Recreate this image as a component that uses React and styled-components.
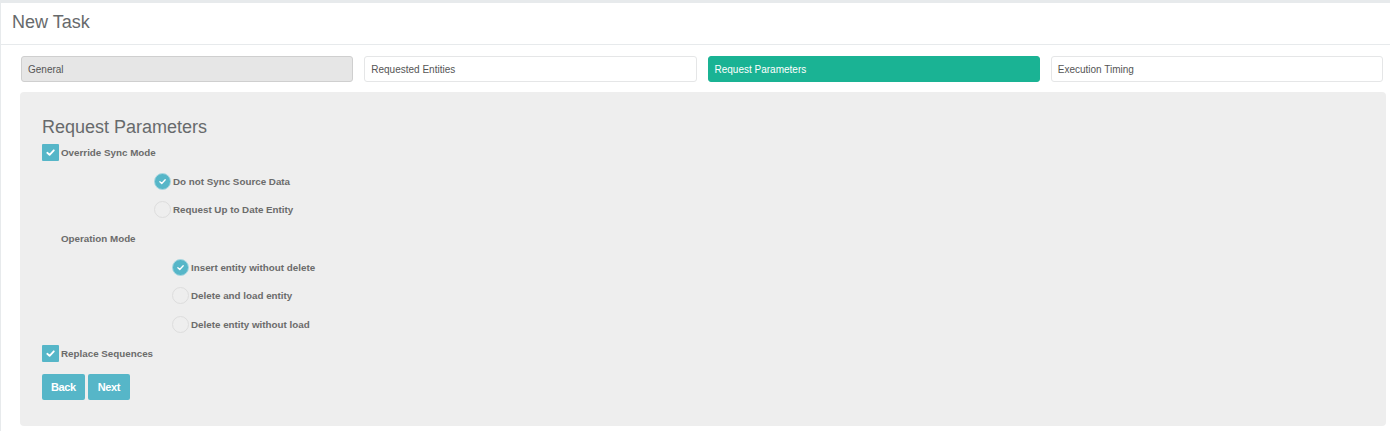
import React from "react";
import styled, { createGlobalStyle } from "styled-components";

const Global = createGlobalStyle`
  html, body { margin: 0; padding: 0; background: #ffffff; }
  body { font-family: "Liberation Sans", Arial, sans-serif; color: #676a6c; }
`;

const Page = styled.div`
  border-top: 3px solid #e7eaec;
  width: 1390px;
  height: 431px;
  box-sizing: border-box;
`;

const Card = styled.div`
  border-left: 1px solid #e7eaec;
  height: 100%;
  box-sizing: border-box;
  background: #fff;
`;

const Header = styled.div`
  height: 42px;
  box-sizing: border-box;
  border-bottom: 1px solid #e7eaec;
  display: flex;
  align-items: center;
  padding-left: 11px;
  padding-bottom: 3px;
  font-size: 18px;
  color: #676a6c;
`;

const Tabs = styled.div`
  display: grid;
  grid-template-columns: repeat(4, 1fr);
  column-gap: 11px;
  margin: 11px 7px 0 20px;
`;

const Tab = styled.div`
  height: 26px;
  box-sizing: border-box;
  border-radius: 3px;
  border: 1px solid ${(p) => (p.$variant === "done" ? "#cfcfcf" : p.$variant === "active" ? "#1ab394" : "#e5e6e7")};
  background: ${(p) => (p.$variant === "done" ? "#e6e6e6" : p.$variant === "active" ? "#1ab394" : "#ffffff")};
  color: ${(p) => (p.$variant === "active" ? "#ffffff" : "#555555")};
  font-size: 10px;
  display: flex;
  align-items: center;
  padding-left: 6px;
`;

const Panel = styled.div`
  margin: 10px 4px 0 19px;
  background: #eeeeee;
  border-radius: 4px;
  padding: 25px 22px 25px 22px;
  height: 334px;
  box-sizing: border-box;
`;

const Title = styled.div`
  font-size: 18px;
  line-height: 20px;
  color: #676a6c;
  margin-bottom: 7px;
`;

const Form = styled.div`
  display: flex;
  flex-direction: column;
  gap: 11.7px;
`;

const Row = styled.label`
  display: flex;
  align-items: center;
  height: 17px;
  padding-left: ${(p) => p.$indent || 0}px;
  gap: 2px;
  font-size: 9.8px;
  font-weight: bold;
  color: #6b6b6b;
`;

const Plain = styled.div`
  height: 17px;
  display: flex;
  align-items: center;
  padding-left: ${(p) => p.$indent || 0}px;
  font-size: 9.8px;
  font-weight: bold;
  color: #6b6b6b;
`;

const Box = styled.span`
  width: 17px;
  height: 17px;
  background: #56b6c8;
  border-radius: 1px;
  display: inline-flex;
  align-items: center;
  justify-content: center;
  flex: none;
`;

const Circle = styled.span`
  width: 17px;
  height: 17px;
  box-sizing: border-box;
  border-radius: 50%;
  border: 1px solid ${(p) => (p.$on ? "#a9d8e1" : "#dddddd")};
  background: ${(p) => (p.$on ? "#56b6c8" : "#eeeeee")};
  display: inline-flex;
  align-items: center;
  justify-content: center;
  flex: none;
`;

const Buttons = styled.div`
  display: flex;
  gap: 3px;
  margin-top: 12px;
`;

const Button = styled.button`
  height: 26px;
  border: none;
  border-radius: 2px;
  background: #56b6c8;
  color: #ffffff;
  font-family: "Liberation Sans", Arial, sans-serif;
  font-weight: bold;
  font-size: 11px;
  padding: 0 ${(p) => p.$px || 9}px;
  letter-spacing: -0.4px;
`;

const Check = () => (
  <svg width="11" height="11" viewBox="0 0 12 12">
    <path d="M2.5 6.3 L5 8.6 L9.6 3.6" fill="none" stroke="#fff" strokeWidth="2" strokeLinecap="round" strokeLinejoin="round" />
  </svg>
);

const SmallCheck = () => (
  <svg width="9" height="9" viewBox="0 0 12 12">
    <path d="M2.5 6.3 L5 8.6 L9.6 3.6" fill="none" stroke="#fff" strokeWidth="1.8" strokeLinecap="round" strokeLinejoin="round" />
  </svg>
);

const CheckRow = ({ children }) => (
  <Row>
    <Box><Check /></Box>
    {children}
  </Row>
);

const RadioRow = ({ on, indent, children }) => (
  <Row $indent={indent}>
    <Circle $on={on}>{on && <SmallCheck />}</Circle>
    {children}
  </Row>
);

export default function App() {
  return (
    <>
      <Global />
      <Page>
        <Card>
          <Header>New Task</Header>
          <Tabs>
            <Tab $variant="done">General</Tab>
            <Tab>Requested Entities</Tab>
            <Tab $variant="active">Request Parameters</Tab>
            <Tab>Execution Timing</Tab>
          </Tabs>
          <Panel>
            <Title>Request Parameters</Title>
            <Form>
              <CheckRow>Override Sync Mode</CheckRow>
              <RadioRow on indent={112}>Do not Sync Source Data</RadioRow>
              <RadioRow indent={112}>Request Up to Date Entity</RadioRow>
              <Plain $indent={19}>Operation Mode</Plain>
              <RadioRow on indent={130}>Insert entity without delete</RadioRow>
              <RadioRow indent={130}>Delete and load entity</RadioRow>
              <RadioRow indent={130}>Delete entity without load</RadioRow>
              <CheckRow>Replace Sequences</CheckRow>
            </Form>
            <Buttons>
              <Button $px={9}>Back</Button>
              <Button $px={10}>Next</Button>
            </Buttons>
          </Panel>
        </Card>
      </Page>
    </>
  );
}
